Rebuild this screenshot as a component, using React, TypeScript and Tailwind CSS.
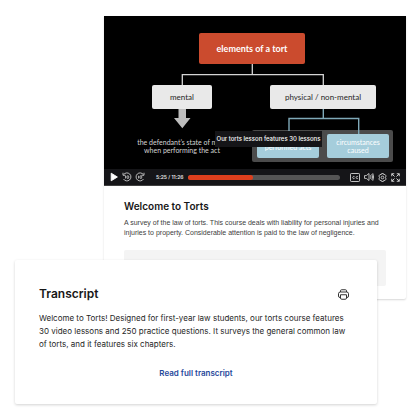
import type { ReactNode } from 'react';

interface NodeProps {
  className: string;
  children: ReactNode;
}

interface ControlProps {
  label: string;
  className?: string;
  children: ReactNode;
}

const PLAYED = 325;
const DURATION = 686;
const PROGRESS = 43;

const DiagramNode = ({ className, children }: NodeProps) => (
  <div className={`absolute flex justify-center rounded-xs text-center ${className}`}>{children}</div>
);

const Connectors = () => (
  <svg className="absolute inset-0 h-full w-full" viewBox="0 0 302 153" fill="none" aria-hidden="true">
    <path d="M148.3 48V58.7M78.3 69V58.7H219.3V69" stroke="#d4d4d4" strokeWidth="1.3" />
    <path d="M219.3 93V102.5M185 120V102.5H254.7V120" stroke="#7fa9b8" strokeWidth="1.4" />
    <path d="M74.5 93h7.5v9h4.5L78.3 112.3 70 102h4.5z" fill="#bdbdbd" />
  </svg>
);

const Control = ({ label, className = '', children }: ControlProps) => (
  <button type="button" aria-label={label} className={`shrink-0 cursor-pointer ${className}`}>
    {children}
  </button>
);

const PlayIcon = () => (
  <svg className="h-3 w-2" viewBox="0 0 8 12" fill="#fff">
    <path d="M1.2 2.2v7.6L7.4 6z" stroke="#fff" strokeWidth=".9" strokeLinejoin="round" />
  </svg>
);

const SkipIcon = ({ flipped = false }: { flipped?: boolean }) => (
  <svg className="size-[10px]" viewBox="0 0 20 20" fill="none" stroke="#d6d6d6" strokeWidth="1.7">
    <g transform={flipped ? 'matrix(-1 0 0 1 20 0)' : undefined}>
      <path d="M3.3 5.2A8 8 0 1 1 3 14" />
      <path d="M2 1.5v5h5" />
    </g>
    <path d="M7.2 7.5V13" />
    <rect x="10" y="7.5" width="3.4" height="5.4" rx="1.6" />
  </svg>
);

const CaptionsIcon = () => (
  <svg className="h-[9px] w-[10px]" viewBox="0 0 20 18" fill="none" stroke="#d6d6d6" strokeWidth="1.8">
    <rect x="1" y="1" width="18" height="16" rx="1.5" />
    <path d="M9 7.3A2.2 2.2 0 1 0 9 10.8M15.7 7.3a2.2 2.2 0 1 0 0 3.5" strokeWidth="1.7" />
  </svg>
);

const VolumeIcon = () => (
  <svg className="size-[10px]" viewBox="0 0 20 20" fill="none" stroke="#d6d6d6" strokeWidth="1.7">
    <path d="M1 7.2h3.6L10 3v14l-5.4-4.2H1z" strokeLinejoin="round" />
    <path d="M13 6.5q2 3.5 0 7M15.5 4.2q3.5 5.8 0 11.6M17.5 2.5q3.5 7.5 0 15" />
  </svg>
);

const SettingsIcon = () => (
  <svg className="size-[9px]" viewBox="0 0 20 20" fill="none" stroke="#d6d6d6" strokeWidth="1.9">
    <path
      d="M8 1.2h4l.8 2.6 2.7-.6 2.5 3.3L16.6 10l1.4 3.5-2.5 3.3-2.7-.6-.8 2.6H8l-.8-2.6-2.7.6L2 13.5 3.4 10 2 6.5l2.5-3.3 2.7.6z"
      strokeLinejoin="round"
    />
    <circle cx="10" cy="10" r="3" />
  </svg>
);

const FullscreenIcon = () => (
  <svg className="size-[9px]" viewBox="0 0 18 18" fill="none" stroke="#d6d6d6" strokeWidth="1.9">
    <path d="M1.5 6.5v-5h5M11.5 1.5h5v5M16.5 11.5v5h-5M6.5 16.5h-5v-5" />
    <path d="M1.5 1.5 7 7M16.5 1.5 11 7M16.5 16.5 11 11M1.5 16.5 7 11" />
  </svg>
);

const PrinterIcon = () => (
  <svg className="size-[11px]" viewBox="0 0 22 22" fill="none" stroke="#333" strokeWidth="2">
    <path d="M5 6V3.5A2 2 0 0 1 7 1.5h8a2 2 0 0 1 2 2V6" />
    <path d="M5 17H4a3 3 0 0 1-3-3V9.5A3.5 3.5 0 0 1 4.5 6h13A3.5 3.5 0 0 1 21 9.5V14a3 3 0 0 1-3 3h-1" />
    <path d="M5 11.5h12V18a2.5 2.5 0 0 1-2.5 2.5h-7A2.5 2.5 0 0 1 5 18z" />
  </svg>
);

const LessonSlide = () => (
  <div className="relative mx-auto h-[153px] w-[302px] font-['Lato',sans-serif] text-[8px] leading-2 text-neutral-800">
    <div className="absolute top-[114px] left-[148px] h-8 w-[141px] rounded-xs bg-[#4b4b4b]" />
    <Connectors />
    <DiagramNode className="top-[17px] left-[95px] h-[31px] w-[106px] items-center bg-[#cb4b2e] text-[9px] font-bold text-white">
      elements of a tort
    </DiagramNode>
    <DiagramNode className="top-[69px] left-12 h-6 w-[60px] items-center bg-[#e9e9e9]">mental</DiagramNode>
    <DiagramNode className="top-[69px] left-[166px] h-6 w-[106px] items-center bg-[#e9e9e9]">
      physical / non-mental
    </DiagramNode>
    <DiagramNode className="top-[118px] left-[153px] h-6 w-[62px] items-end bg-[#a5cddb] pb-[7px] text-[7px] text-white">
      performed acts
    </DiagramNode>
    <DiagramNode className="top-[118px] left-[223px] h-6 w-[62px] items-center bg-[#a5cddb] text-[7px] text-white">
      circumstances
      <br />
      caused
    </DiagramNode>
    <p className="absolute top-[122px] left-6 w-[108px] text-center text-[7px] whitespace-nowrap text-neutral-300">
      the defendant’s state of mind
      <br />
      when performing the act
    </p>
    <div
      role="tooltip"
      className="absolute top-[115px] left-[111px] flex h-4 w-[107px] items-center justify-center bg-[#151518] font-['Inter',sans-serif] text-[6px] font-medium whitespace-nowrap text-white"
    >
      Our torts lesson features 30 lessons
    </div>
  </div>
);

const PlayerControls = () => (
  <div className="flex h-[17px] items-center border-b border-neutral-700 bg-[#151518] px-1.5">
    <Control label="Play">
      <PlayIcon />
    </Control>
    <Control label="Back 10 seconds" className="ml-1">
      <SkipIcon />
    </Control>
    <Control label="Forward 10 seconds" className="ml-[3px]">
      <SkipIcon flipped />
    </Control>
    <span className="ml-[11px] w-8 shrink-0 text-[5px] leading-2 font-semibold whitespace-nowrap text-neutral-200">
      5:25 / 11:26
    </span>
    <div className="relative h-[5px] flex-1 rounded-full bg-[#555]">
      <div className="h-full rounded-full bg-[#de3f1d]" style={{ width: `${PROGRESS}%` }} />
      <input
        type="range"
        aria-label="Seek"
        min={0}
        max={DURATION}
        defaultValue={PLAYED}
        className="absolute inset-0 h-full w-full cursor-pointer opacity-0"
      />
    </div>
    <div className="ml-[10px] flex items-center gap-1">
      <Control label="Captions">
        <CaptionsIcon />
      </Control>
      <Control label="Volume">
        <VolumeIcon />
      </Control>
      <Control label="Settings">
        <SettingsIcon />
      </Control>
      <Control label="Full screen">
        <FullscreenIcon />
      </Control>
    </div>
  </div>
);

const CourseCard = () => (
  <article className="mr-[14px] ml-[104px] rounded-b-xs shadow-[0_1px_2px_rgba(0,0,0,0.16)]">
    <div className="bg-black">
      <LessonSlide />
      <PlayerControls />
    </div>
    <div className="px-5 pt-3 pb-[13px]">
      <h2 className="text-[10px] leading-4 font-semibold text-neutral-900">Welcome to Torts</h2>
      <p className="mt-1 font-['Liberation_Sans',sans-serif] text-[7px] leading-[10px] whitespace-nowrap text-neutral-700">
        A survey of the law of torts. This course deals with liability for personal injuries and
        <br />
        injuries to property. Considerable attention is paid to the law of negligence.
      </p>
      <div className="mt-3 h-9 rounded-xs bg-[#f4f4f4]" />
    </div>
  </article>
);

const TranscriptCard = () => (
  <section className="relative -mt-[39px] mr-[43px] ml-[15px] rounded-xs bg-white p-6 shadow-[0_1px_3px_rgba(0,0,0,0.18)]">
    <div className="flex items-center justify-between pr-1">
      <h2 className="text-[12px] leading-5 font-semibold text-neutral-900">Transcript</h2>
      <button type="button" aria-label="Print transcript" className="cursor-pointer">
        <PrinterIcon />
      </button>
    </div>
    <p className="mt-2 text-[8px] leading-[13px] whitespace-nowrap text-neutral-800">
      Welcome to Torts! Designed for first-year law students, our torts course features
      <br />
      30 video lessons and 250 practice questions. It surveys the general common law
      <br />
      of torts, and it features six chapters.
    </p>
    <a href="#transcript" className="mx-auto mt-4 block w-fit text-[8px] leading-[13px] font-semibold text-[#1f489b]">
      Read full transcript
    </a>
  </section>
);

const App = () => (
  <main className="min-h-screen bg-white py-4 font-['Inter',sans-serif]">
    <CourseCard />
    <TranscriptCard />
  </main>
);

export default App;
